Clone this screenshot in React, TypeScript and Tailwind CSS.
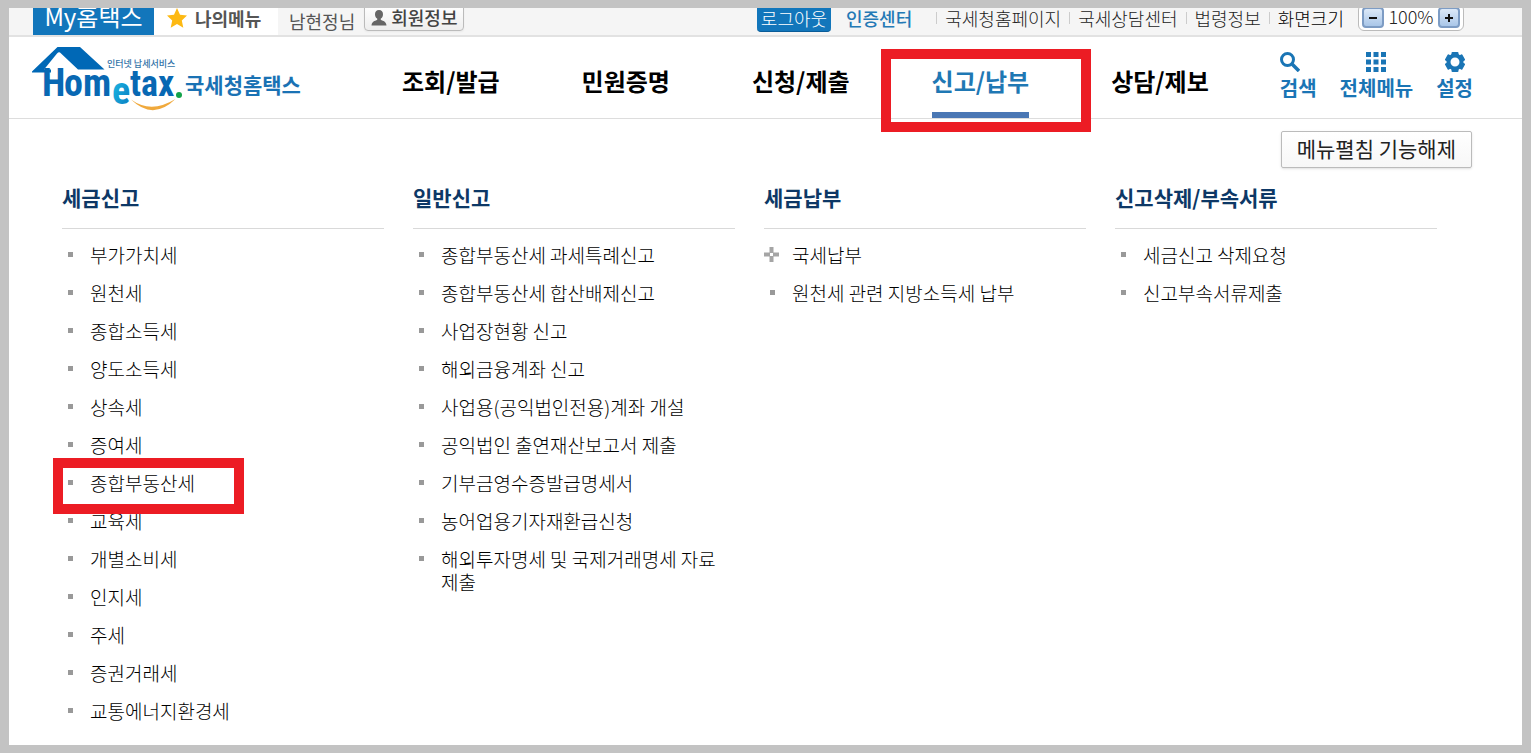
/**
 * App — 홈택스 상단 메뉴 (신고/납부 펼침)
 */

import clsx from 'clsx';

interface MenuItem {
  label: string;
  expandable?: boolean;
  marked?: boolean;
}

interface MenuGroup {
  title: string;
  items: MenuItem[];
}

const NAV = ['조회/발급', '민원증명', '신청/제출', '신고/납부', '상담/제보'];
const ACTIVE_NAV = '신고/납부';

const SITE_LINKS = ['국세청홈페이지', '국세상담센터', '법령정보'];

const GROUPS: MenuGroup[] = [
  {
    title: '세금신고',
    items: [
      { label: '부가가치세' },
      { label: '원천세' },
      { label: '종합소득세' },
      { label: '양도소득세' },
      { label: '상속세' },
      { label: '증여세' },
      { label: '종합부동산세', marked: true },
      { label: '교육세' },
      { label: '개별소비세' },
      { label: '인지세' },
      { label: '주세' },
      { label: '증권거래세' },
      { label: '교통에너지환경세' },
    ],
  },
  {
    title: '일반신고',
    items: [
      { label: '종합부동산세 과세특례신고' },
      { label: '종합부동산세 합산배제신고' },
      { label: '사업장현황 신고' },
      { label: '해외금융계좌 신고' },
      { label: '사업용(공익법인전용)계좌 개설' },
      { label: '공익법인 출연재산보고서 제출' },
      { label: '기부금영수증발급명세서' },
      { label: '농어업용기자재환급신청' },
      { label: '해외투자명세 및 국제거래명세 자료 제출' },
    ],
  },
  {
    title: '세금납부',
    items: [{ label: '국세납부', expandable: true }, { label: '원천세 관련 지방소득세 납부' }],
  },
  {
    title: '신고삭제/부속서류',
    items: [{ label: '세금신고 삭제요청' }, { label: '신고부속서류제출' }],
  },
];

function Logo() {
  return (
    <svg width="270" height="81" viewBox="32 37 270 81" role="img" aria-label="국세청홈택스">
      <defs>
        <linearGradient id="cyan" x1="0" y1="0" x2="1" y2="1">
          <stop offset="0" stopColor="#1fc3ea" />
          <stop offset="1" stopColor="#0877bd" />
        </linearGradient>
      </defs>
      <path d="M32 71.500 57.500 47H80l24.500 22.500H78L60 52.500Q58.500 51.800 57 53.500L44 69.500h7v3H32Z" fill="#0068b6" />
      <g fill="#0868b3" fontFamily="'Roboto Condensed', Roboto, sans-serif" fontWeight="700">
        <text x="42" y="96" fontSize="38">H</text>
        <text x="64" y="96" fontSize="38">om</text>
        <text x="112" y="104" fontSize="38" fill="url(#cyan)">e</text>
        <text x="130" y="96" fontSize="36">tax</text>
      </g>
      <circle cx="179" cy="95" r="3" fill="#13a34a" />
      <path d="M131 99.500Q151 114 175.500 99Q153 121 131 99.500Z" fill="#f0a93c" />
      <g fontFamily="'Noto Sans CJK KR', sans-serif">
        <text x="107" y="67" fontSize="9" fontWeight="500" fill="#3273a8">인터넷 납세서비스</text>
        <text x="185" y="93" fontSize="21" fontWeight="700" fill="#1a72b4">국세청홈택스</text>
      </g>
    </svg>
  );
}

function SearchIcon() {
  return (
    <svg width="20" height="20" viewBox="0 0 20 20" fill="none" stroke="#1a75b5">
      <circle cx="7.500" cy="7.500" r="6" strokeWidth="3" />
      <path d="m12 12 7 7" strokeWidth="3.500" />
    </svg>
  );
}

function GridIcon() {
  return (
    <svg width="20" height="20" viewBox="0 0 20 20" fill="#1a75b5">
      {[0, 7.5, 15].map((y) => [0, 7.5, 15].map((x) => <rect key={`${x}-${y}`} x={x} y={y} width="5" height="5" />))}
    </svg>
  );
}

function GearIcon() {
  return (
    <svg width="20" height="20" viewBox="0 0 20 20" fill="none" stroke="#1a75b5">
      <circle cx="10" cy="10" r="6.500" strokeWidth="4" />
      <g fill="#1a75b5" stroke="none">
        {[0, 60, 120, 180, 240, 300].map((deg) => (
          <rect key={deg} x="6.500" y="0" width="7" height="4" rx="1" transform={`rotate(${deg} 10 10)`} />
        ))}
      </g>
    </svg>
  );
}

function TopBar() {
  return (
    <div className="flex h-[29px] items-start overflow-hidden border-b-2 border-[#e2e2e2] bg-[#f5f5f5] pr-[58px] pl-6 text-lg leading-5 whitespace-nowrap text-[#222]">
      <a href="#my" className="h-[27px] w-[121px] overflow-hidden bg-[#1276bb] text-center text-2xl leading-4 text-white">
        My홈택스
      </a>
      <a href="#menu" className="flex h-[27px] w-[124px] gap-2 bg-white pl-[13px] font-bold text-[#555]">
        <svg width="20" height="20" viewBox="0 0 20 20" fill="#fdb913">
          <path d="m10 0 3 6.700 7 .8-5.200 5 1.500 7.200L10 16.100l-6.300 3.600 1.500-7.200L0 7.500l7-.8Z" />
        </svg>
        나의메뉴
      </a>
      <span className="ml-[11px] leading-[26px] text-[#555]">남현정님</span>
      <button className="-mt-1 ml-[9px] flex h-[27px] w-[100px] items-start gap-1 rounded-sm border border-[#bbb] bg-linear-to-b from-white to-[#eee] pt-[2px] pl-[6px] font-medium text-[#444] shadow-xs">
        <svg width="16" height="16" viewBox="0 0 16 16" fill="#666" className="mt-[3px]">
          <path d="M8 0c2.600 0 4 1.700 4 4.200 0 2-.9 3.600-2.200 4.400v1.500c2.600.8 5.200 1.600 5.700 5.400H.5c.5-3.800 3.100-4.600 5.700-5.400V8.600C4.900 7.800 4 6.200 4 4.200 4 1.700 5.400 0 8 0Z" />
        </svg>
        회원정보
      </button>

      <button className="-mt-1 ml-auto h-7 w-[74px] rounded-sm border-b border-[#0a5c98] bg-[#1276bb] font-light text-white">
        로그아웃
      </button>
      <a href="#cert" className="mr-6 ml-[15px] font-medium text-[#2479b5]">
        인증센터
      </a>
      <ul className="flex gap-2">
        {SITE_LINKS.map((label) => (
          <li key={label} className="flex items-center gap-2">
            <span className="h-3 w-px bg-[#ccc]" />
            <a href="#site" className="font-light">{label}</a>
          </li>
        ))}
        <li className="flex items-center gap-2">
          <span className="h-3 w-px bg-[#ccc]" />
          <span className="font-light text-black">화면크기</span>
        </li>
      </ul>
      <div className="-mt-1 ml-[14px] flex h-[27px] w-[106px] items-center justify-between rounded-md border border-[#bbb] bg-white px-[3px]">
        <ZoomButton label="축소" />
        <span className="pb-1 font-light">100%</span>
        <ZoomButton label="확대" plus />
      </div>
    </div>
  );
}

function ZoomButton({ label, plus }: { label: string; plus?: boolean }) {
  return (
    <button
      aria-label={label}
      className="flex h-[21px] w-[22px] items-center justify-center rounded-sm border-2 border-[#7d9cc4] bg-linear-to-b from-[#dce9f8] to-[#a9c6e8]"
    >
      <svg width="8" height="8" viewBox="0 0 8 8" stroke="#111" strokeWidth="2">
        <path d={plus ? 'M0 4h8M4 0v8' : 'M0 4h8'} />
      </svg>
    </button>
  );
}

function Header() {
  return (
    <header className="flex h-[82px] border-b border-[#ddd] pr-[49px] pl-[23px] whitespace-nowrap">
      <a href="#home" className="mr-[100px]">
        <Logo />
      </a>
      <nav className="flex gap-[82px] text-2xl leading-9 font-bold text-black">
        {NAV.map((label) => (
          <a key={label} href="#nav" className={clsx('relative pt-[26px]', label === ACTIVE_NAV && 'text-[#1f78b4]')}>
            {label}
            {label === ACTIVE_NAV && (
              <>
                <span className="absolute inset-x-0 bottom-0 h-[6px] bg-[#4a77b4]" />
                <span className="absolute top-3 -left-[51px] z-10 h-[83px] w-[210px] border-10 border-[#ec1c24]" />
              </>
            )}
          </a>
        ))}
      </nav>
      <div className="ml-auto flex gap-[23px] pt-[15px] text-xl leading-8 font-bold text-[#1a75b5]">
        <button className="flex flex-col items-start">
          <SearchIcon />
          검색
        </button>
        <button className="flex flex-col items-center">
          <GridIcon />
          전체메뉴
        </button>
        <button className="flex flex-col items-center">
          <GearIcon />
          설정
        </button>
      </div>
    </header>
  );
}

function MenuColumn({ group }: { group: MenuGroup }) {
  return (
    <section>
      <h2 className="border-b border-[#d9d9d9] pb-[17px] text-[21px] leading-7 font-bold text-[#0d3866]">{group.title}</h2>
      <ul className="flex flex-col gap-[15px] pt-[14px] text-[19px] leading-[23px] font-light text-black">
        {group.items.map((item) => (
          <li key={item.label} className="relative flex">
            <span className="flex h-[23px] w-7 shrink-0 items-center">
              {item.expandable ? (
                <svg width="15" height="15" viewBox="0 0 15 15" stroke="#a5a5a5" strokeWidth="4">
                  <path d="M0 7.500h6M9 7.500h6M7.500 0v6M7.500 9v6" />
                </svg>
              ) : (
                <span className="ml-[6px] h-[5px] w-[5px] bg-[#999]" />
              )}
            </span>
            <a href="#item" className="break-keep">{item.label}</a>
            {item.marked && (
              <span className="pointer-events-none absolute -top-[13px] -left-[9px] z-10 h-14 w-[191px] border-10 border-[#ec1c24]" />
            )}
          </li>
        ))}
      </ul>
    </section>
  );
}

export default function App() {
  return (
    <div className="flex min-h-screen flex-col bg-[#c3c3c3] px-[9px] py-2 font-['Noto_Sans_CJK_KR',sans-serif]">
      <div className="grow bg-white">
        <TopBar />
        <Header />
        <main>
          <div className="flex justify-end pt-3 pr-[50px]">
            <button className="h-[37px] rounded-xs border border-[#bbb] bg-linear-to-b from-white to-[#f7f7f7] px-[15px] pb-[3px] text-[21px] leading-8 text-[#222] shadow-sm">
              메뉴펼침 기능해제
            </button>
          </div>
          <div className="grid grid-cols-4 gap-[29px] pt-[15px] pr-[85px] pl-[53px]">
            {GROUPS.map((group) => (
              <MenuColumn key={group.title} group={group} />
            ))}
          </div>
        </main>
      </div>
    </div>
  );
}
